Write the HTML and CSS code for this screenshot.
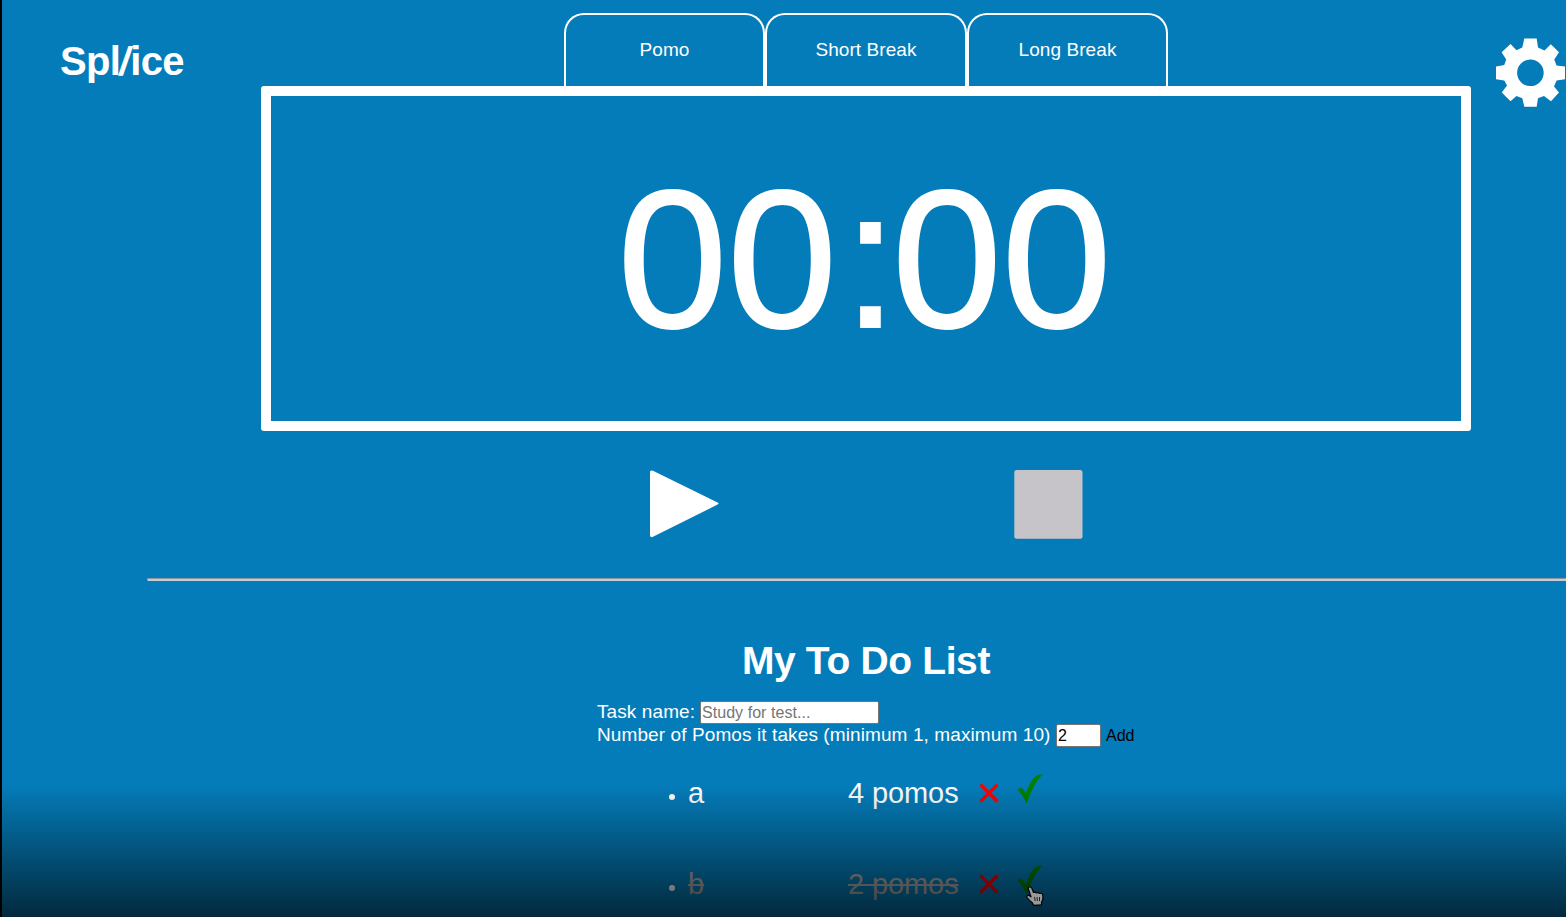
FILE: index.html
```html
<!DOCTYPE html>
<html lang="en">
<head>
<meta charset="utf-8">
<title>Spl/ice</title>
<link rel="stylesheet" href="styles.css">
</head>
<body>
<div class="page">
  <header class="top">
    <div class="brand">Spl<span class="slash">/</span>ice</div>
    <main class="clock">
      <nav class="tabs">
        <button class="tab">Pomo</button>
        <button class="tab">Short Break</button>
        <button class="tab">Long Break</button>
      </nav>
      <div class="timer"><span class="digits">00<span class="colon">:</span>00</span></div>
    </main>
    <div class="settings">
      <svg class="gear" viewBox="0 0 70 70">
        <path fill="#fff" fill-rule="evenodd" d="M28.300 0.500H40.700L42 9.500L48.500 12.400L54.800 6.200L63 14.300L58.300 21.500L60.500 27.500L69 28.400V41.300L60.600 42.500L58 48.500L63 54.500L55 63.300L48 58L42 60.300L40.700 68.700H28.300L26.300 60.300L20.500 58L14.500 63.300L5.800 54.500L11 47.500L8.300 42.500L0 41.300V28.400L8.300 27L10.200 21.500L5.600 14.300L14.500 6L20.500 12.200L26.300 9.500ZM34.400 21.500A13.300 13.300 0 1 0 34.400 48.100A13.300 13.300 0 1 0 34.400 21.500Z"/>
      </svg>
    </div>
  </header>
  <div class="controls">
    <svg class="control" viewBox="0 0 69 69"><path fill="#fff" d="M0 1.500Q1 -.3 3 .8L67.600 32.600Q69.500 33.600 67.600 34.600L3 66.800Q1 67.800 0 66Z"/></svg>
    <svg class="control" viewBox="0 0 69 69"><rect x=".3" width="68.200" height="68.800" rx="2.500" fill="#c6c4c8"/></svg>
  </div>
  <div class="rule"></div>
  <section class="todo">
    <h1 class="heading">My To Do List</h1>
    <form class="form">
      <div class="field"><label class="label-task">Task name:</label><input class="task" type="text" placeholder="Study for test..."></div>
      <div class="field"><label class="label-count">Number of Pomos it takes (minimum 1, maximum 10)</label><input class="count" type="text" value="2"><button class="add" type="button">Add</button></div>
    </form>
    <ul class="list">
      <li class="item">
        <span class="dot"></span><span class="name">a</span><span class="amount">4 pomos</span>
        <svg class="cross" viewBox="0 0 20 20"><path d="M1.500 1.500L18.500 18.500M18.500 1.500L1.500 18.500" stroke="#f00" stroke-width="3.200"/></svg>
        <svg class="check" viewBox="0 0 26 30"><path fill="#008000" d="M.3 15.500L4 13.300Q7 15.500 8.800 19.500Q12.500 8 18.500 2.200Q21.500 -.1 25.500 .5Q16.500 9 10 29H9Q5.500 20 .3 15.500Z"/></svg>
      </li>
      <li class="item">
        <span class="dot"></span><span class="name done">b</span><span class="amount done">2 pomos</span>
        <svg class="cross" viewBox="0 0 20 20"><path d="M1.500 1.500L18.500 18.500M18.500 1.500L1.500 18.500" stroke="#f00" stroke-width="3.200"/></svg>
        <svg class="check" viewBox="0 0 26 30"><path fill="#008000" d="M.3 15.500L4 13.300Q7 15.500 8.800 19.500Q12.500 8 18.500 2.200Q21.500 -.1 25.500 .5Q16.500 9 10 29H9Q5.500 20 .3 15.500Z"/></svg>
      </li>
    </ul>
  </section>
  <div class="shade"></div>
  <svg class="cursor" viewBox="0 0 18 20">
    <path fill="#999" stroke="#000" stroke-width="1.200" stroke-linejoin="round" d="M3 1Q5 .2 6 2.500L7.500 6.500Q9 5.500 10.500 7Q12.500 6 13.500 7.500Q16.500 6.500 16.800 9.500Q17.500 13.500 15.500 16L15.500 18.800L7.500 19.300L6.500 17Q3 14 1 11.500Q.3 9 3 9.500L5 10.800L2.300 3Q2 1.500 3 1Z"/>
    <path stroke="#000" stroke-width=".8" d="M8.500 11L9.200 15M11 11L11.400 15M13.500 11L13.500 15"/>
  </svg>
</div>
</body>
</html>
```

FILE: styles.css
```css
* { box-sizing: border-box; }
body {
  margin: 0;
  background: #047cb9;
  color: #fff;
  font-family: "Liberation Sans", Arial, sans-serif;
}
button, input { font-family: inherit; margin: 0; }
svg { display: block; flex: none; }

.page {
  position: relative;
  width: 1566px;
  height: 917px;
  overflow: hidden;
  border-left: 2px solid #000;
}
.top { display: flex; height: 431px; }
.brand {
  width: 259px;
  padding: 38px 0 0 58px;
  font-size: 40px;
  line-height: 46px;
  font-weight: bold;
  white-space: nowrap;
  letter-spacing: -0.7px;
}
.slash {
  display: inline-block;
  margin: 0 -0.4px 0 -0.6px;
  letter-spacing: 0;
  transform: skewX(-9deg);
}
.clock { width: 1210px; padding-top: 13px; flex: none; }
.tabs { display: flex; justify-content: center; height: 73px; }
.tab {
  width: 201.500px;
  height: 73px;
  padding: 0 0 2px;
  border: 2.400px solid #fff;
  border-bottom: 0;
  border-radius: 20px 20px 0 0;
  background: none;
  color: #fff;
  font-size: 19px;
  letter-spacing: 0.08px;
}
.timer {
  display: flex;
  align-items: center;
  justify-content: center;
  height: 345px;
  border: 10px solid #fff;
  border-radius: 3px;
}
.digits {
  margin-left: -3px;
  font-size: 197.500px;
  line-height: 226px;
  -webkit-text-stroke: 1.800px #fff;
}
.colon { position: relative; left: 6px; }
.settings { padding: 38px 0 0 25px; }
.gear { width: 70px; height: 70px; }

.controls { display: flex; gap: 294.500px; padding: 39px 0 0 648px; height: 147px; }
.control { width: 69px; height: 69px; }
.rule {
  height: 3px;
  margin-left: 145px;
  border-top: 1px solid #8c96a3;
  border-left: 1px solid #8c96a3;
  background: #c3cdd5;
}

.todo { padding-top: 57px; }
.heading {
  margin: 0;
  width: 1728px;
  text-align: center;
  font-size: 39px;
  line-height: 46px;
  letter-spacing: -0.35px;
}
.form { padding: 17px 0 0 595px; font-size: 19px; }
.field { display: flex; align-items: center; height: 23px; white-space: nowrap; }
.label-task { width: 103px; line-height: 22px; letter-spacing: 0.1px; }
.label-count { width: 459px; line-height: 22px; letter-spacing: 0.1px; }
.label-task, .label-count { padding-bottom: 1px; }
.task, .count {
  height: 23px;
  padding: 1px;
  border: 2px solid #767676;
  border-width: 1.500px;
  border-radius: 2px;
  background: #fff;
  font-size: 16px;
}
.task { width: 179px; letter-spacing: 0.05px; }
.task::placeholder { color: #757575; }
.count { width: 45px; color: #000; }
.add { padding: 0 0 0 5px; border: 0; background: none; color: #000; font-size: 16px; }

.list { list-style: none; margin: 0; padding: 24px 0 0 667px; }
.item { display: flex; align-items: flex-start; height: 91px; font-size: 29px; line-height: 44px; }
.dot { width: 6px; height: 6px; margin: 23px 13px 0 0; border-radius: 50%; background: #fff; }
.name { width: 160px; }
.amount { width: 131px; white-space: nowrap; letter-spacing: -0.1px; }
.done { color: #acacac; text-decoration: line-through; text-decoration-thickness: 2px; }
.cross { width: 20px; height: 20px; margin: 12px 18px 0 0; }
.check { width: 26px; height: 30px; margin-top: 3px; }

.shade {
  position: absolute;
  left: -2px;
  right: 0;
  bottom: 0;
  height: 132px;
  background: linear-gradient(rgba(0, 0, 0, 0), rgba(0, 0, 0, .67));
}
.cursor { position: absolute; left: 1024px; top: 886px; width: 18px; height: 20px; }
```
